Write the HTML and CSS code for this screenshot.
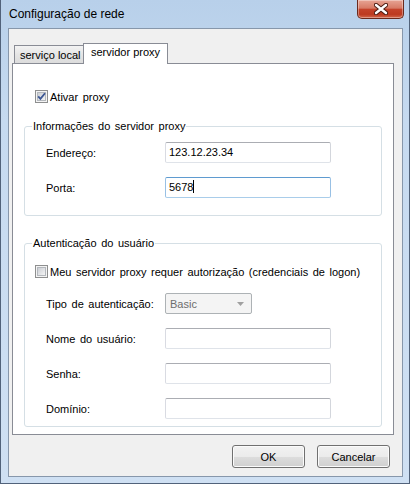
FILE: index.html
```html
<!DOCTYPE html>
<html lang="pt-br">
<head>
    <meta charset="UTF-8">
    <title>Configuração de rede</title>
    <link rel="stylesheet" href="styles.css">
</head>
<body>

<div class="window">
    <div class="titlebar">
        <span class="title">Configuração de rede</span>
        <div class="close">
            <svg width="14" height="12" viewBox="0 0 14 12">
                <path d="M2 2 L12 10 M12 2 L2 10" stroke="#4b1b12" stroke-width="4.4" stroke-linecap="round"/>
                <path d="M2 2 L12 10 M12 2 L2 10" stroke="#ffffff" stroke-width="2.4" stroke-linecap="round"/>
            </svg>
        </div>
    </div>

    <div class="client">
        <div class="tabs">
            <div class="tab">serviço local</div>
            <div class="tab active">servidor proxy</div>
        </div>

        <div class="panel">
            <div class="check first">
                <svg class="box" width="13" height="13" viewBox="0 0 13 13">
                    <defs>
                        <linearGradient id="g1" x1="0" y1="0" x2="1" y2="1">
                            <stop offset="0" stop-color="#c9ccd2"/>
                            <stop offset="1" stop-color="#f7f7f7"/>
                        </linearGradient>
                    </defs>
                    <rect x="0.5" y="0.5" width="12" height="12" fill="#f4f4f4" stroke="#8e8f8f"/>
                    <rect x="2.5" y="2.5" width="8" height="8" fill="url(#g1)" stroke="#b4b8bd"/>
                    <path d="M3.2 6.3 L5.4 8.8 L10 3.2" fill="none" stroke="#3c5794" stroke-width="1.8"/>
                </svg>
                <span>Ativar proxy</span>
            </div>

            <fieldset class="group">
                <legend>Informações do servidor proxy</legend>
                <div class="form">
                    <span>Endereço:</span>
                    <div class="field">123.12.23.34</div>
                    <span>Porta:</span>
                    <div class="field focus">5678<span class="caret"></span></div>
                </div>
            </fieldset>

            <fieldset class="group auth">
                <legend>Autenticação do usuário</legend>
                <div class="check">
                    <svg class="box" width="13" height="13" viewBox="0 0 13 13">
                        <defs>
                            <linearGradient id="g2" x1="0" y1="0" x2="1" y2="1">
                                <stop offset="0" stop-color="#c9ccd2"/>
                                <stop offset="1" stop-color="#f7f7f7"/>
                            </linearGradient>
                        </defs>
                        <rect x="0.5" y="0.5" width="12" height="12" fill="#f4f4f4" stroke="#8e8f8f"/>
                        <rect x="2.5" y="2.5" width="8" height="8" fill="url(#g2)" stroke="#b4b8bd"/>
                    </svg>
                    <span>Meu servidor proxy requer autorização (credenciais de logon)</span>
                </div>
                <div class="form">
                    <span>Tipo de autenticação:</span>
                    <div class="select">
                        <span>Basic</span>
                        <svg width="7" height="4" viewBox="0 0 7 4"><path d="M0 0 H7 L3.5 4 Z" fill="#a0a0a0"/></svg>
                    </div>
                    <span>Nome do usuário:</span>
                    <div class="field"></div>
                    <span>Senha:</span>
                    <div class="field"></div>
                    <span>Domínio:</span>
                    <div class="field"></div>
                </div>
            </fieldset>
        </div>

        <div class="buttons">
            <button>OK</button>
            <button>Cancelar</button>
        </div>
    </div>
</div>

</body>
</html>
```

FILE: styles.css
```css
* {
    margin: 0;
    padding: 0;
    box-sizing: border-box;
}

body {
    font-family: 'Liberation Sans', Arial, sans-serif;
    font-size: 11px;
    color: #000;
    background: #c9dcf1;
}

.window {
    width: 410px;
    height: 484px;
    padding: 0 6px 0 7px;
    background: linear-gradient(180deg, #b8d0ea 0%, #c6daf0 25%, #cfe0f3 100%);
    border: 1px solid #51627a;
    border-top: none;
}

.titlebar {
    height: 28px;
    display: flex;
    justify-content: space-between;
    align-items: flex-start;
}

.title {
    font-size: 12px;
    line-height: 14px;
    padding: 7px 0 0 1px;
}

.close {
    width: 47px;
    height: 19px;
    display: flex;
    align-items: center;
    justify-content: center;
    background: linear-gradient(180deg, #e7a494 0%, #d77a65 45%, #c4422a 52%, #bd3a20 80%, #d2684c 100%);
    border: 1px solid #6b2a1d;
    border-top: none;
    border-radius: 0 0 5px 5px;
    box-shadow: inset 0 0 0 1px rgba(255, 255, 255, 0.35);
    margin-right: -1px;
}

.client {
    height: 449px;
    border: 1px solid #8797ab;
    background: #f0f0f0;
    padding: 14px 8px 0 3px;
}

.tabs {
    display: flex;
    align-items: flex-end;
    height: 21px;
    margin-left: 2px;
    margin-bottom: -1px;
    position: relative;
    z-index: 1;
}

.tab {
    width: 70px;
    height: 19px;
    border: 1px solid #898c95;
    background: linear-gradient(180deg, #f3f3f3, #e5e5e5 50%, #dcdcdc);
    padding-left: 5px;
    line-height: 18px;
}

.tab.active {
    width: 85px;
    height: 21px;
    margin-left: -1px;
    border-bottom: none;
    background: #fff;
    padding-left: 7px;
    line-height: 17px;
}

.panel {
    height: 372px;
    border: 1px solid #898c95;
    background: #fff;
    padding-top: 26px;
    word-spacing: 1.5px;
}

.check {
    display: flex;
    align-items: center;
    height: 13px;
    margin-left: 10px;
}

.check.first {
    margin-left: 22px;
}

.box {
    margin-right: 2px;
    flex-shrink: 0;
}

.group {
    margin: 17px 11px 0 11px;
    border: 1px solid #d5dfe5;
    border-radius: 3px;
    padding: 9px 0 17px 0;
}

.group legend {
    margin-left: 7px;
    padding: 0 1px;
    line-height: 13px;
}

.group.auth {
    margin-top: 21px;
    padding: 15px 0 7px 0;
}

.form {
    display: grid;
    grid-template-columns: 119px 166px;
    row-gap: 14px;
    align-items: center;
    padding-left: 21px;
}

.auth .form {
    margin-top: 15px;
}

.field {
    height: 21px;
    border: 1px solid;
    border-color: #abadb3 #d3d6dc #dfe3e9 #d9dbe2;
    border-radius: 2px;
    background: #fff;
    padding-left: 3px;
    line-height: 19px;
}

.field.focus {
    border-color: #5f9bd0 #98c0e4 #a9cdea #98c0e4;
}

.caret {
    display: inline-block;
    width: 1px;
    height: 13px;
    background: #000;
    vertical-align: -2px;
}

.select {
    width: 87px;
    height: 21px;
    display: flex;
    justify-content: space-between;
    align-items: center;
    border: 1px solid #adb2b5;
    border-radius: 2px;
    background: #f4f4f4;
    color: #6d6d6d;
    padding: 0 7px 0 4px;
}

.buttons {
    display: flex;
    justify-content: flex-end;
    gap: 12px;
    margin-top: 10px;
    padding-right: 4px;
}

button {
    width: 73px;
    height: 23px;
    border: 1px solid #707070;
    border-radius: 3px;
    background: linear-gradient(180deg, #f2f2f2 0%, #ebebeb 50%, #dddddd 50%, #cfcfcf 100%);
    box-shadow: inset 0 0 0 1px #fbfbfb;
    font-family: 'Liberation Sans', Arial, sans-serif;
    font-size: 11px;
    color: #000;
}
```
